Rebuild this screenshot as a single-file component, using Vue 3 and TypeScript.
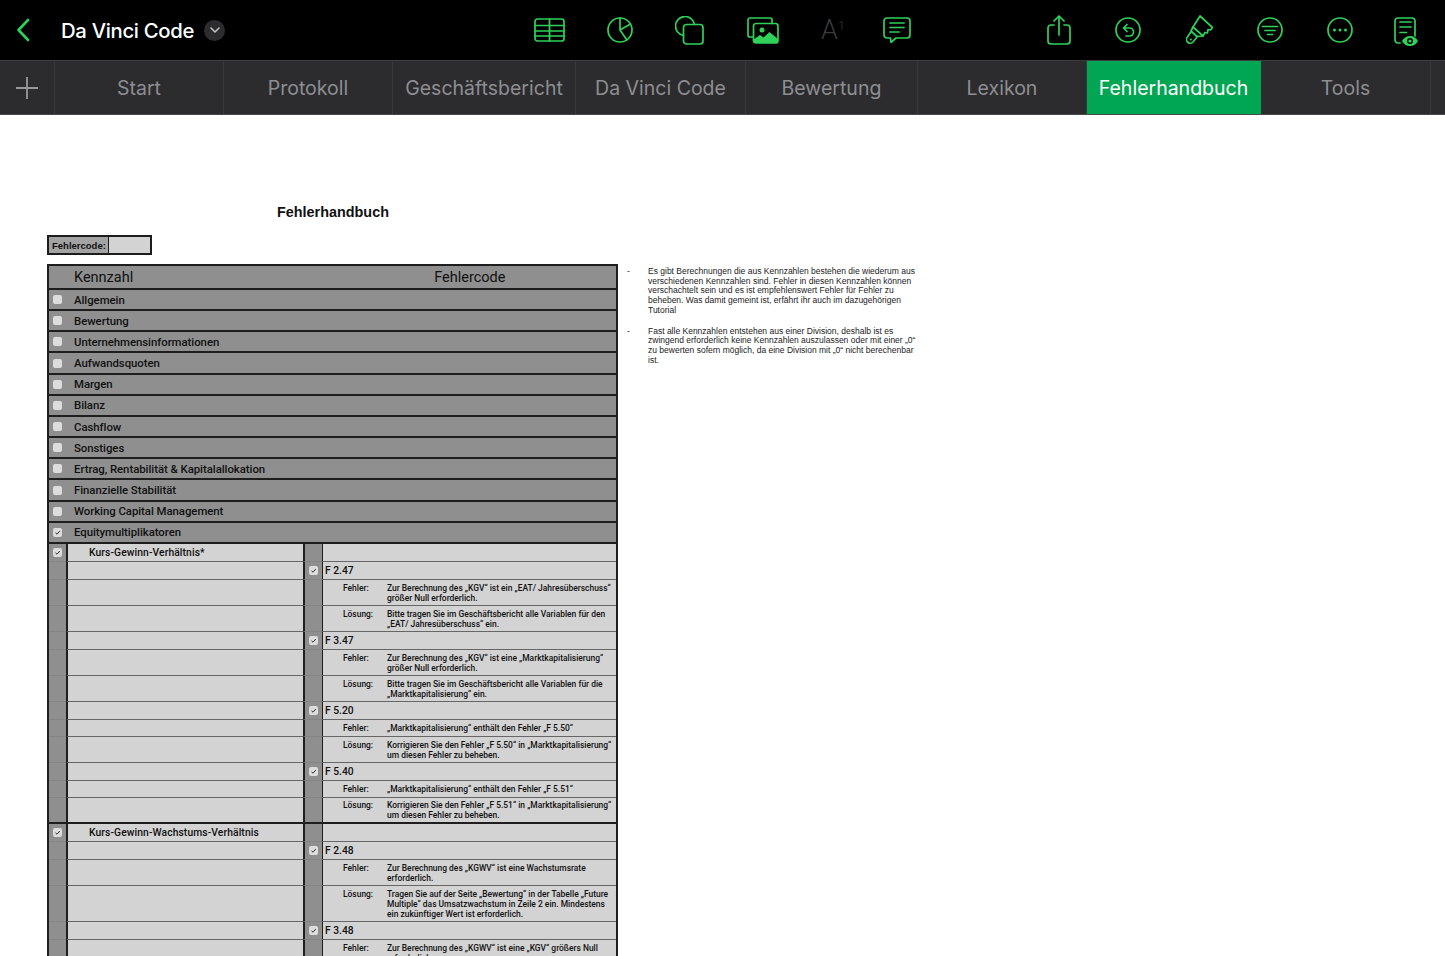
<template>
  <div class="app">
    <header class="toolbar">
      <div class="left">
        <svg class="back" width="14" height="24" viewBox="0 0 14 24"><path d="M12 2 2.500 12 12 22" /></svg>
        <span class="doc-title">Da Vinci Code</span>
        <span class="doc-badge">
          <svg width="10" height="6" viewBox="0 0 10 6"><path d="M1 1l4 4 4-4" /></svg>
        </span>
      </div>
      <div class="icons mid">
        <svg width="31" height="24" viewBox="0 0 31 24"><rect x="1" y="1" width="29" height="22" rx="2.500" /><path d="M1 7.500h29M1 13h29M1 18h29M15.500 1v22" /></svg>
        <svg width="26" height="26" viewBox="0 0 26 26"><circle cx="13" cy="13" r="12" /><path d="M13 1v12l10.500-6M13 13l6.500 9.500" /></svg>
        <svg width="30" height="29" viewBox="0 0 30 29"><path d="M8.500 19.400A9.500 9.500 0 1 1 19.400 8.500" /><rect x="8.500" y="8.500" width="19.500" height="19.500" rx="3" /></svg>
        <svg width="32" height="27" viewBox="0 0 32 27"><path d="M5.500 20H3a2 2 0 0 1-2-2V3a2 2 0 0 1 2-2h20a2 2 0 0 1 2 2v3.500" /><rect x="6.500" y="6.500" width="24.500" height="19.500" rx="2.500" /><circle class="fill" cx="15" cy="13" r="2.500" /><path class="fill" d="M6.500 26v-3.500l6.500-4.500 3.500 2.500 6-5.500 8.500 7V26z" /></svg>
        <span class="font-size">A<sup>1</sup></span>
        <svg width="28" height="26" viewBox="0 0 28 26"><path d="M4 1h20a3 3 0 0 1 3 3v14a3 3 0 0 1-3 3H13l-5 4.500L7.500 21H4a3 3 0 0 1-3-3V4a3 3 0 0 1 3-3z" /><path d="M7 6h14M7 10.500h14M7 15h9" /></svg>
      </div>
      <div class="icons end">
        <svg width="24" height="30" viewBox="0 0 24 30"><path d="M7 10H4a3 3 0 0 0-3 3v13a3 3 0 0 0 3 3h16a3 3 0 0 0 3-3V13a3 3 0 0 0-3-3h-3" /><path d="M12 20V1.500M7 6l5-5 5 5" /></svg>
        <svg width="26" height="26" viewBox="0 0 26 26"><circle cx="13" cy="13" r="12" /><path d="M12 7.500 8.500 11l3.500 3.500M8.500 11h6a4 4 0 0 1 0 8H11" /></svg>
        <svg class="brush" width="27" height="30" viewBox="0 0 27 30"><path d="M14 1 26.500 12.500l-2 2.500-2.500-.5-.5 3.500-2.500-.5-2 3.500L7 12z" /><path d="M7 12l-2 4 6 5.500 6-.5M5.500 16 1.500 22a3.500 3.500 0 0 0 5.500 5l4.500-5.500" /><circle class="fill" cx="4.800" cy="24.500" r="1.100" /></svg>
        <svg width="26" height="26" viewBox="0 0 26 26"><circle cx="13" cy="13" r="12" /><path d="M5.500 9.500h15M8 13.500h10M10.500 17.500h5" /></svg>
        <svg width="26" height="26" viewBox="0 0 26 26"><circle cx="13" cy="13" r="12" /><circle class="fill" cx="7.500" cy="13" r="1.500" /><circle class="fill" cx="13" cy="13" r="1.500" /><circle class="fill" cx="18.500" cy="13" r="1.500" /></svg>
        <svg class="doc" width="24" height="30" viewBox="0 0 24 30"><path d="M6 26H4a3 3 0 0 1-3-3V4a3 3 0 0 1 3-3h14a3 3 0 0 1 3 3v15" /><path d="M6 5h11M6 10h11M6 15.500h6.500" /><path class="fill" d="M8 24c1.500-3 4.500-5 8-5s6.500 2 8 5c-1.500 3-4.500 5-8 5s-6.500-2-8-5z" /><circle class="cut" cx="16" cy="24" r="3" /><circle class="fill" cx="16" cy="24" r="1.600" /></svg>
      </div>
    </header>

    <nav class="tabs">
      <div class="tab add" style="width: 55px">
        <svg width="22" height="22" viewBox="0 0 22 22"><path d="M11 0v22M0 11h22" /></svg>
      </div>
      <div
        v-for="t in tabs"
        :key="t.name"
        class="tab"
        :class="{ active: t.name === 'Fehlerhandbuch' }"
        :style="{ width: t.w + 'px' }"
      >{{ t.name }}</div>
    </nav>

    <main class="sheet">
      <div class="col-left">
        <h1 class="title">Fehlerhandbuch</h1>
        <div class="code-box">
          <span class="code-label">Fehlercode:</span>
          <span class="code-input"></span>
        </div>

        <div class="table">
          <div class="head">
            <span class="head-a">Kennzahl</span>
            <span class="head-b">Fehlercode</span>
          </div>
          <div class="sections">
            <div v-for="s in sections" :key="s" class="section">
              <span class="box">
                <svg v-if="s === 'Equitymultiplikatoren'" width="9" height="9" viewBox="0 0 9 9"><path d="M2.500 4.800 4 6.200 6.800 3" /></svg>
              </span>
              <span class="section-name">{{ s }}</span>
            </div>
          </div>

          <div
            v-for="(r, i) in rows"
            :key="i"
            class="row"
            :class="{ 'row-last': r.last }"
            :style="{ height: r.h + 'px' }"
          >
            <div class="c-gray">
              <span v-if="r.kind === 'group'" class="box">
                <svg width="9" height="9" viewBox="0 0 9 9"><path d="M2.500 4.800 4 6.200 6.800 3" /></svg>
              </span>
            </div>
            <div class="c-name">{{ r.kind === 'group' ? r.text : '' }}</div>
            <div class="c-gray mid-gray">
              <span v-if="r.kind === 'code'" class="box">
                <svg width="9" height="9" viewBox="0 0 9 9"><path d="M2.500 4.800 4 6.200 6.800 3" /></svg>
              </span>
            </div>
            <div class="c-main">
              <span v-if="r.kind === 'code'" class="code">{{ r.text }}</span>
              <div v-else-if="r.kind === 'detail'" class="detail">
                <span class="detail-label">{{ r.label }}</span>
                <span class="detail-text">
                  <span v-for="l in r.lines" :key="l" class="detail-line">{{ l }}</span>
                </span>
              </div>
            </div>
          </div>
        </div>
      </div>

      <aside class="notes">
        <div v-for="n in notes" :key="n[0]" class="note">
          <span class="dash">-</span>
          <div>
            <div v-for="l in n" :key="l">{{ l }}</div>
          </div>
        </div>
      </aside>
    </main>
  </div>
</template>

<script setup lang="ts">
interface Row {
  kind: 'group' | 'code' | 'detail'
  h: number
  text?: string
  label?: string
  lines?: string[]
  last?: boolean
}

const tabs = [
  { name: 'Start', w: 169 },
  { name: 'Protokoll', w: 169 },
  { name: 'Geschäftsbericht', w: 183 },
  { name: 'Da Vinci Code', w: 170 },
  { name: 'Bewertung', w: 172 },
  { name: 'Lexikon', w: 169 },
  { name: 'Fehlerhandbuch', w: 174 },
  { name: 'Tools', w: 170 },
]

const sections = [
  'Allgemein',
  'Bewertung',
  'Unternehmensinformationen',
  'Aufwandsquoten',
  'Margen',
  'Bilanz',
  'Cashflow',
  'Sonstiges',
  'Ertrag, Rentabilität & Kapitalallokation',
  'Finanzielle Stabilität',
  'Working Capital Management',
  'Equitymultiplikatoren',
]

const group = (text: string, last = false): Row => ({ kind: 'group', h: 18, text, last })
const code = (text: string): Row => ({ kind: 'code', h: 18, text })
const detail = (label: string, h: number, lines: string[], last = false): Row => ({ kind: 'detail', label, h, lines, last })

const rows: Row[] = [
  group('Kurs-Gewinn-Verhältnis*'),
  code('F 2.47'),
  detail('Fehler:', 26, ['Zur Berechnung des „KGV“ ist ein „EAT/ Jahresüberschuss“', 'größer Null erforderlich.']),
  detail('Lösung:', 26, ['Bitte tragen Sie im Geschäftsbericht alle Variablen für den', '„EAT/ Jahresüberschuss“ ein.']),
  code('F 3.47'),
  detail('Fehler:', 26, ['Zur Berechnung des „KGV“ ist eine „Marktkapitalisierung“', 'größer Null erforderlich.']),
  detail('Lösung:', 26, ['Bitte tragen Sie im Geschäftsbericht alle Variablen für die', '„Marktkapitalisierung“ ein.']),
  code('F 5.20'),
  detail('Fehler:', 17, ['„Marktkapitalisierung“ enthält den Fehler „F 5.50“']),
  detail('Lösung:', 26, ['Korrigieren Sie den Fehler „F 5.50“ in „Marktkapitalisierung“', 'um diesen Fehler zu beheben.']),
  code('F 5.40'),
  detail('Fehler:', 17, ['„Marktkapitalisierung“ enthält den Fehler „F 5.51“']),
  detail('Lösung:', 26, ['Korrigieren Sie den Fehler „F 5.51“ in „Marktkapitalisierung“', 'um diesen Fehler zu beheben.'], true),
  group('Kurs-Gewinn-Wachstums-Verhältnis'),
  code('F 2.48'),
  detail('Fehler:', 26, ['Zur Berechnung des „KGWV“ ist eine Wachstumsrate', 'erforderlich.']),
  detail('Lösung:', 36, ['Tragen Sie auf der Seite „Bewertung“ in der Tabelle „Future', 'Multiple“ das Umsatzwachstum in Zeile 2 ein. Mindestens', 'ein zukünftiger Wert ist erforderlich.']),
  code('F 3.48'),
  detail('Fehler:', 26, ['Zur Berechnung des „KGWV“ ist eine „KGV“ größers Null', 'erforderlich.']),
]

const notes = [
  [
    'Es gibt Berechnungen die aus Kennzahlen bestehen die wiederum aus',
    'verschiedenen Kennzahlen sind. Fehler in diesen Kennzahlen können',
    'verschachtelt sein und es ist empfehlenswert Fehler für Fehler zu',
    'beheben. Was damit gemeint ist, erfährt ihr auch im dazugehörigen',
    'Tutorial',
  ],
  [
    'Fast alle Kennzahlen entstehen aus einer Division, deshalb ist es',
    'zwingend erforderlich keine Kennzahlen auszulassen oder mit einer „0“',
    'zu bewerten sofern möglich, da eine Division mit „0“ nicht berechenbar',
    'ist.',
  ],
]
</script>

<style>
html,
body {
  margin: 0;
  background: #fff;
  overflow: hidden;
}
</style>

<style scoped>
.app {
  height: 956px;
  overflow: hidden;
  font-family: Roboto, "Liberation Sans", sans-serif;
}

.toolbar {
  display: flex;
  align-items: center;
  height: 60px;
  background: #000;
  padding-right: 27px;
}

.toolbar svg {
  display: block;
  fill: none;
  stroke: #2fd158;
  stroke-width: 1.7;
  stroke-linecap: round;
  stroke-linejoin: round;
}

.toolbar svg .fill {
  fill: #2fd158;
  stroke: none;
}

.toolbar svg .cut {
  fill: #000;
  stroke: none;
}

.left {
  display: flex;
  align-items: center;
  width: 534px;
  flex: none;
  padding-left: 16px;
  box-sizing: border-box;
}

.toolbar .back {
  stroke-width: 2.600;
}

.doc-title {
  margin-left: 31px;
  color: #fff;
  font-family: Inter, sans-serif;
  font-size: 20.300px;
  font-weight: 500;
  letter-spacing: -0.3px;
}

.doc-badge {
  display: flex;
  align-items: center;
  justify-content: center;
  width: 21px;
  height: 21px;
  margin-left: 10px;
  border-radius: 50%;
  background: #2c2c2e;
}

.toolbar .doc-badge svg {
  stroke: #c4c4c8;
  stroke-width: 1.500;
}

.icons {
  display: flex;
  align-items: center;
}

.mid {
  gap: 42px;
}

.end {
  gap: 44px;
  margin-left: auto;
}

.toolbar .brush {
  margin-left: 1px;
}

.toolbar .doc {
  margin-left: -3px;
  margin-top: 3px;
}

.font-size {
  display: block;
  width: 20px;
  color: #3a3a3c;
  font-size: 27px;
  font-weight: 300;
  line-height: 30px;
  white-space: nowrap;
}

.font-size sup {
  font-size: 12.500px;
  line-height: 0;
  vertical-align: 9px;
}

.tabs {
  display: flex;
  height: 53px;
  margin-bottom: -1px;
  background: #2c2c2e;
  border-top: 1px solid #3c3c3e;
  border-bottom: 1px solid #47474a;
}

.tab {
  display: flex;
  align-items: center;
  justify-content: center;
  flex: none;
  box-sizing: border-box;
  border-right: 1px solid #3a3a3c;
  color: #8e8e93;
  font-family: Inter, sans-serif;
  font-size: 19.500px;
}

.tab.active {
  background: #00a651;
  border-right-color: #00a651;
  color: #fff;
}

.add svg {
  fill: none;
  stroke: #98989d;
  stroke-width: 1.800;
}

.sheet {
  display: flex;
  align-items: flex-start;
  padding-left: 47px;
}

.col-left {
  width: 571px;
  flex: none;
}

.title {
  margin: 90px 0 0 230px;
  color: #111;
  font-family: "Liberation Sans", sans-serif;
  font-size: 14.400px;
  font-weight: 700;
  line-height: 17px;
}

.code-box {
  display: flex;
  box-sizing: border-box;
  width: 105px;
  height: 20px;
  margin-top: 14px;
  border: 2px solid #1c1c1c;
  background: #a3a3a3;
}

.code-label {
  width: 60px;
  padding-left: 3px;
  box-sizing: border-box;
  border-right: 1px solid #1c1c1c;
  color: #111;
  font-family: "Liberation Sans", sans-serif;
  font-size: 9.500px;
  font-weight: 700;
  line-height: 17px;
}

.code-input {
  flex: 1;
  background: #d3d3d3;
}

.table {
  margin-top: 9px;
  border: 2px solid #1e1e1e;
  border-bottom: 0;
  color: #111;
  background: #8f8f8f;
}

.head {
  display: flex;
  height: 22px;
  align-items: center;
  padding-top: 1px;
  box-sizing: border-box;
  font-size: 14.500px;
  line-height: 21px;
}

.head-a {
  margin-left: 25px;
}

.head-b {
  margin-left: 301px;
}

.sections {
  display: grid;
  grid-auto-rows: 1fr;
  height: 256px;
  border-top: 2px solid #1e1e1e;
  box-sizing: border-box;
}

.section {
  display: flex;
  align-items: center;
  border-bottom: 2px solid #1e1e1e;
  font-size: 11.400px;
  font-weight: 500;
  letter-spacing: -0.05px;
}

.section-name {
  margin-left: 12px;
}

.box {
  display: block;
  flex: none;
  width: 9px;
  height: 9px;
  margin-left: 4px;
  border-radius: 2px;
  background: #dcdcdc;
}

.box svg {
  display: block;
  fill: none;
  stroke: #333;
  stroke-width: 1;
}

.row {
  display: grid;
  grid-template-columns: 17px 237px 20px 1fr;
  box-sizing: border-box;
  font-size: 10.300px;
  font-weight: 500;
}

.c-gray {
  display: flex;
  align-items: center;
  background: #8f8f8f;
  border-bottom: 1px solid #858585;
  box-sizing: border-box;
}

.mid-gray {
  border-left: 2px solid #1e1e1e;
  border-right: 1px solid #1e1e1e;
}

.c-name {
  display: flex;
  align-items: center;
  padding-left: 21px;
  border-left: 2px solid #1e1e1e;
  border-bottom: 1px solid #666;
  background: #d3d3d3;
  box-sizing: border-box;
  letter-spacing: 0.1px;
}

.c-main {
  display: flex;
  align-items: center;
  border-bottom: 1px solid #666;
  background: #d3d3d3;
  box-sizing: border-box;
}

.row-last .c-name,
.row-last .c-gray,
.row-last .c-main {
  border-bottom: 2px solid #1e1e1e;
}

.code {
  margin-left: 2px;
  font-size: 10.300px;
}

.detail {
  display: flex;
  align-items: center;
  font-size: 8.450px;
  line-height: 10px;
}

.detail-label {
  width: 44px;
  margin-left: 20px;
  flex: none;
  align-self: flex-start;
}

.detail-line {
  display: block;
  white-space: nowrap;
}

.notes {
  margin: 153px 0 0 9px;
  color: #222;
  font-family: "Liberation Sans", sans-serif;
  font-size: 8.500px;
  line-height: 9.700px;
}

.note {
  display: flex;
  margin-bottom: 11px;
  white-space: nowrap;
}

.dash {
  width: 21px;
  flex: none;
}
</style>
